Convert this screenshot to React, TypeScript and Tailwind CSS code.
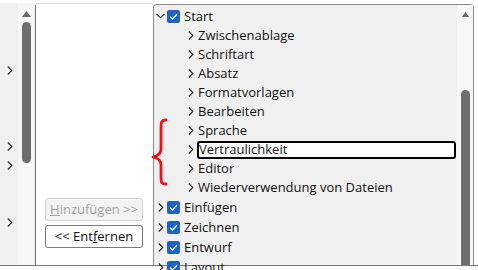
import React from "react";

const font = { fontFamily: '"Open Sans", "Liberation Sans", Arial, sans-serif' };

function Chevron({ down = false }: { down?: boolean }) {
  if (down) {
    return (
      <svg width="9" height="6" viewBox="0 0 9 6" className="shrink-0">
        <polyline points="0.5,0.8 4.5,4.8 8.5,0.8" fill="none" stroke="#222" strokeWidth="1.1" />
      </svg>
    );
  }
  return (
    <svg width="6" height="9" viewBox="0 0 6 9" className="shrink-0">
      <polyline points="0.8,0.5 4.8,4.5 0.8,8.5" fill="none" stroke="#222" strokeWidth="1.1" />
    </svg>
  );
}

function Check() {
  return (
    <span className="flex h-[13px] w-[13px] shrink-0 items-center justify-center rounded-[2px] bg-[#1f63c8]">
      <svg width="9" height="7" viewBox="0 0 9 7">
        <polyline points="1,3.6 3.4,6 8,1.2" fill="none" stroke="#fff" strokeWidth="1.3" />
      </svg>
    </span>
  );
}

function TopRow({ label, open = false }: { label: string; open?: boolean }) {
  return (
    <div className="flex h-[20px] items-center">
      <span className="flex w-[12px] justify-center pl-[1px]">
        <Chevron down={open} />
      </span>
      <span className="ml-[1px] mr-[4px]">
        <Check />
      </span>
      <span className="leading-none">{label}</span>
    </div>
  );
}

function ChildRow({ label, focused = false }: { label: string; focused?: boolean }) {
  return (
    <div className="flex h-[19px] items-center pl-[34px]">
      <Chevron />
      {focused ? (
        <span className="ml-[3px] mr-[1px] flex h-[18px] flex-1 items-center rounded-[3px] border-2 border-black bg-white leading-none">
          {label}
        </span>
      ) : (
        <span className="ml-[4px] leading-none">{label}</span>
      )}
    </div>
  );
}

const children = [
  "Zwischenablage",
  "Schriftart",
  "Absatz",
  "Formatvorlagen",
  "Bearbeiten",
  "Sprache",
  "Vertraulichkeit",
  "Editor",
  "Wiederverwendung von Dateien",
];

export default function App() {
  return (
    <div className="relative h-[270px] w-[478px] overflow-hidden bg-white text-[13px] text-[#111]" style={font}>
      <div className="flex h-[266px] border-b border-[#7a7a7a] pt-[3px]">
        {/* left list */}
        <div className="flex w-[36px] shrink-0 border-r border-[#6f6f6f] rounded-tr-[4px] bg-[#f0f0f0]">
          <div className="relative w-[18px]">
            <span className="absolute left-[7px] top-[63px]"><Chevron /></span>
            <span className="absolute left-[7px] top-[139px]"><Chevron /></span>
            <span className="absolute left-[7px] top-[158px]"><Chevron /></span>
            <span className="absolute left-[7px] top-[215px]"><Chevron /></span>
          </div>
          <div className="flex w-[17px] flex-col items-center bg-[#f6f6f6] pt-[8px]">
            <svg width="9" height="6" viewBox="0 0 9 6">
              <polygon points="4.5,0 9,6 0,6" fill="#6a6a6a" />
            </svg>
            <div className="mt-[5px] h-[141px] w-[9px] rounded-full bg-[#6e6e6e]" />
          </div>
        </div>

        {/* middle */}
        <div className="flex w-[117px] shrink-0 flex-col justify-end border-t border-[#e4e4e4] pb-[17px] pl-[9px]">
          <button
            disabled
            className="mb-[4px] h-[23px] w-[98px] rounded-[3px] border border-[#d2d2d2] bg-[#f3f3f3] text-[13px] leading-none text-[#a3a3a3]"
          >
            <span className="underline">H</span>inzufügen &gt;&gt;
          </button>
          <button className="h-[23px] w-[98px] rounded-[3px] border border-[#7a7a7a] bg-white text-[13px] leading-none text-[#111]">
            &lt;&lt; Ent<span className="underline">f</span>ernen
          </button>
        </div>

        {/* tree */}
        <div className="mt-[1px] flex w-[321px] shrink-0 rounded-tl-[4px] rounded-tr-[4px] border-l border-r border-t border-[#8c8c8c] bg-[#f0f0f0]">
          <div className="flex-1 pt-[1px]">
            <TopRow label="Start" open />
            {children.map((c) => (
              <ChildRow key={c} label={c} focused={c === "Vertraulichkeit"} />
            ))}
            <TopRow label="Einfügen" />
            <TopRow label="Zeichnen" />
            <TopRow label="Entwurf" />
            <TopRow label="Layout" />
          </div>
          <div className="flex w-[16px] flex-col items-center bg-[#f7f7f7] pt-[7px]">
            <svg width="9" height="6" viewBox="0 0 9 6">
              <polygon points="4.5,0 9,6 0,6" fill="#6a6a6a" />
            </svg>
            <div className="mt-[73px] h-[200px] w-[9px] rounded-t-full bg-[#6e6e6e]" />
          </div>
        </div>
      </div>

      {/* red brace annotation */}
      <svg className="absolute left-[148px] top-[116px]" width="24" height="72" viewBox="0 0 24 72">
        <path
          d="M18,4 C13,4 13,7 13,12 L13,33 C13,38 10,40 5,41 C10,42 13,44 13,49 L13,62 C13,67 14,68 18,68"
          fill="none"
          stroke="#ee1111"
          strokeWidth="2.8"
          strokeLinecap="round"
          strokeLinejoin="round"
        />
      </svg>
    </div>
  );
}
